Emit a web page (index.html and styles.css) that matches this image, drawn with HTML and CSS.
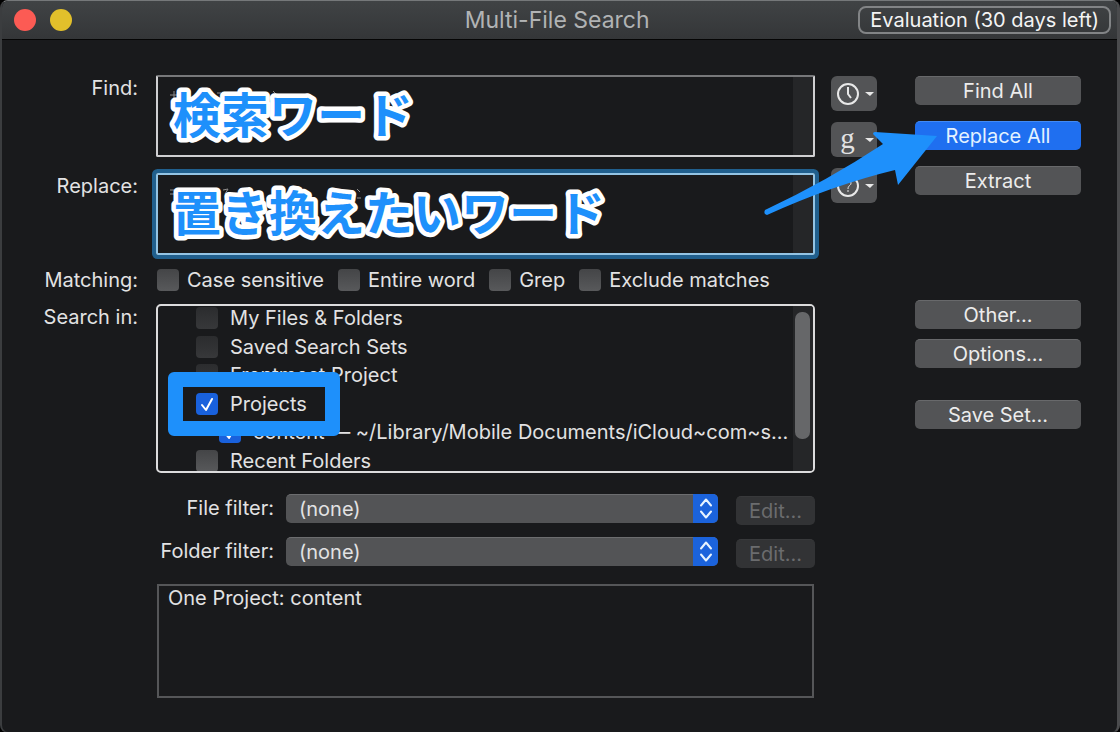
FILE: index.html
```html
<!DOCTYPE html>
<html lang="ja">
<head>
<meta charset="utf-8">
<title>Multi-File Search</title>
<link rel="stylesheet" href="styles.css">
</head>
<body>
<div class="window">
  <header class="titlebar">
    <div class="lights">
      <button class="light light-close" aria-label="Close"></button>
      <button class="light light-min" aria-label="Minimize"></button>
    </div>
    <h1 class="title">Multi-File Search</h1>
    <button class="evaluation">Evaluation (30 days left)</button>
  </header>

  <main class="content">
    <form class="form">
      <label class="label" for="find">Find:</label>
      <div class="field">
        <textarea id="find" class="textbox"></textarea>
        <svg class="note" width="480" height="80">
          <path class="trace" d="M14 20h8M18 16v8M61 18h4M74 18h5M117 16l3 3"/>
          <text class="caption" x="17" y="58">検索ワード</text>
        </svg>
      </div>

      <label class="label" for="replace">Replace:</label>
      <div class="field field-last">
        <textarea id="replace" class="textbox textbox-focused"></textarea>
        <svg class="note" width="480" height="80">
          <path class="trace" d="M14 17h8M14 21h5M67 17l5-1-3 5M185 21h4M201 16l3 3M201 25h4"/>
          <text class="caption" x="17" y="58">置き換えたいワード</text>
        </svg>
      </div>

      <span class="label">Matching:</span>
      <div class="matching">
        <label class="option"><input type="checkbox" class="check">Case sensitive</label>
        <label class="option"><input type="checkbox" class="check">Entire word</label>
        <label class="option"><input type="checkbox" class="check">Grep</label>
        <label class="option"><input type="checkbox" class="check">Exclude matches</label>
      </div>

      <span class="label">Search in:</span>
      <div class="list">
        <ul class="rows">
          <li><label class="row"><input type="checkbox" class="check check-dim">My Files &amp; Folders</label></li>
          <li><label class="row"><input type="checkbox" class="check check-dim">Saved Search Sets</label></li>
          <li><label class="row"><input type="checkbox" class="check check-dim">Frontmost Project</label></li>
          <li><label class="row row-marked"><input type="checkbox" class="check" checked>Projects</label></li>
          <li><label class="row row-child"><input type="checkbox" class="check" checked>content — ~/Library/Mobile Documents/iCloud~com~s...</label></li>
          <li><label class="row"><input type="checkbox" class="check">Recent Folders</label></li>
        </ul>
        <div class="scrollbar"><div class="thumb"></div></div>
      </div>

      <div class="filters">
        <label class="label" for="file-filter">File filter:</label>
        <div class="select-wrap">
          <select id="file-filter" class="select"><option>(none)</option></select>
          <svg class="stepper" viewBox="0 0 25 28"><path d="M8 11l5-6 5 6M8 17l5 6 5-6"/></svg>
        </div>
        <button type="button" class="button" disabled>Edit...</button>
        <label class="label" for="folder-filter">Folder filter:</label>
        <div class="select-wrap">
          <select id="folder-filter" class="select"><option>(none)</option></select>
          <svg class="stepper" viewBox="0 0 25 28"><path d="M8 11l5-6 5 6M8 17l5 6 5-6"/></svg>
        </div>
        <button type="button" class="button" disabled>Edit...</button>
      </div>

      <output class="summary">One Project: content</output>
    </form>

    <div class="tools">
      <button class="tool" aria-label="History">
        <svg width="46" height="35"><circle cx="17" cy="18" r="10" class="line"/><path d="M17 11v7l3 4" class="line"/><path d="M34 16h9l-4 4z" class="solid"/></svg>
      </button>
      <button class="tool" aria-label="Grep patterns"><span class="tool-letter">g</span>
        <svg width="13" height="35"><path d="M1 16h9l-4 4z" class="solid"/></svg>
      </button>
      <button class="tool" aria-label="Help">
        <svg width="46" height="35"><circle cx="17" cy="18" r="10" class="line"/><path d="M14 15c0-4 6-4 6 0 0 3-3 2-3 6M17 22v2" class="line thin"/><path d="M34 16h9l-4 4z" class="solid"/></svg>
      </button>
    </div>

    <div class="actions">
      <div class="group group-main">
        <button class="button">Find All</button>
        <div class="target">
          <button class="button button-primary">Replace All</button>
          <svg class="arrow" width="174" height="86" viewBox="0 0 174 86">
            <path d="M2 79Q64 50 120 13L110 3Q110 1 112 1L174 5 135 54 132 39Q70 54 4 84 0 83 2 79z"/>
          </svg>
        </div>
        <button class="button">Extract</button>
      </div>
      <div class="group group-more">
        <button class="button">Other...</button>
        <button class="button">Options...</button>
      </div>
      <button class="button">Save Set...</button>
    </div>
  </main>
</div>
</body>
</html>
```
FILE: styles.css
```css
* { box-sizing: border-box; }

body {
  margin: 0;
  background: #000;
  color: #e2e2e3;
  font: 20px/24px Inter, "Noto Sans CJK JP", sans-serif;
}

button, textarea, select { font: inherit; color: inherit; margin: 0; }

.window {
  min-height: 100vh;
  background: #191a1c;
  border: 1px solid #75787a;
  border-width: 1px 3px 1px 2px;
  border-color: #75787a #4a4b4d #333436 #3b3d3f;
  border-radius: 8px;
  overflow: hidden;
}

.titlebar {
  height: 39px;
  display: flex;
  align-items: center;
  justify-content: space-between;
  padding: 0 6px 0 12px;
  background: linear-gradient(#404345, #343638);
  border-bottom: 1px solid #050505;
}
.lights { flex: none; display: flex; gap: 14px; width: 242px; }
.light { width: 22px; height: 22px; padding: 0; border: 0; border-radius: 50%; }
.light-close { background: #fc5b54; }
.light-min { background: #e2c02b; }
.title { margin: 0; font-size: 23px; font-weight: 400; color: #b1b3b4; }
.evaluation {
  flex: none;
  height: 28px;
  padding: 0 10px;
  background: transparent;
  border: 2px solid #828486;
  border-radius: 8px;
  color: #f4f4f4;
  line-height: 22px;
}

.content {
  display: grid;
  grid-template-columns: 1fr 84px 166px;
  padding: 35px 36px 34px 28px;
}

.form {
  display: grid;
  grid-template-columns: 108px 1fr;
  column-gap: 18px;
  margin-right: 16px;
}
.label { text-align: right; white-space: nowrap; }
.form > .label { padding-top: 1px; }

.field { position: relative; height: 82px; margin-bottom: 16px; }
.field-last { margin-bottom: 12px; }
.textbox {
  display: block;
  width: 100%;
  height: 100%;
  padding: 8px;
  resize: none;
  outline: 0;
  border: 2px solid #cfcfd1;
  border-top-color: #77787a;
  border-radius: 2px;
  background: linear-gradient(to left, #252628 20px, #191a1c 20px);
}
.textbox-focused {
  border-color: #93c4e4;
  box-shadow: 0 0 0 4px #205f8d;
}
.note { position: absolute; left: 0; top: 0; pointer-events: none; }
.trace { fill: none; stroke: #8c8c8c; stroke-width: 1; }
.caption {
  font: 700 48px "Noto Sans CJK JP", sans-serif;
  fill: #1e90fb;
  stroke: #fff;
  stroke-width: 9px;
  stroke-linejoin: round;
  paint-order: stroke fill;
}

.matching {
  display: flex;
  gap: 14px;
  height: 37px;
  padding: 1px 0 0 1px;
  align-items: flex-start;
}
.option { display: flex; align-items: center; gap: 8px; white-space: nowrap; }
.check {
  appearance: none;
  flex: none;
  width: 22px;
  height: 22px;
  margin: 0;
  border-radius: 4px;
  background: linear-gradient(#444547, #58595b);
}
.check-dim { background: linear-gradient(#2b2c2e, #37383a); }
.check:checked {
  background: #1961dc url("data:image/svg+xml,%3Csvg xmlns='http://www.w3.org/2000/svg' viewBox='0 0 22 22'%3E%3Cpath d='M6 12l4 5 6-11' fill='none' stroke='white' stroke-width='2' stroke-linecap='round' stroke-linejoin='round'/%3E%3C/svg%3E");
}

.list {
  display: flex;
  height: 169px;
  border: 2px solid #dcdcdd;
  border-radius: 5px;
  overflow: hidden;
}
.rows {
  flex: 1;
  min-width: 0;
  height: 171px;
  margin: -2px 0 0;
  padding: 0 0 0 38px;
  list-style: none;
  display: grid;
  grid-template-rows: repeat(6, 1fr);
  align-items: center;
}
.row {
  display: flex;
  align-items: center;
  gap: 12px;
  width: fit-content;
  white-space: nowrap;
}
.row-child { padding-left: 23px; }
.row-marked { position: relative; }
.row-marked::after {
  content: "";
  position: absolute;
  left: -28px;
  right: -33px;
  top: -20px;
  bottom: -20px;
  border: 15px solid #1e90fb;
  border-radius: 6px;
}
.scrollbar { flex: none; width: 20px; padding: 6px 3px 0 2px; background: #252628; }
.thumb { height: 127px; border-radius: 7px; background: #666769; }

.filters {
  grid-column: 2;
  display: grid;
  grid-template-columns: 118px 1fr 79px;
  column-gap: 12px;
  row-gap: 12px;
  margin-top: 21px;
}
.filters .label { line-height: 29px; }
.filters .button { margin-top: 2px; }
.select-wrap { position: relative; height: 29px; margin-right: 6px; }
.select {
  appearance: none;
  display: block;
  width: 100%;
  height: 29px;
  padding: 0 30px 0 13px;
  border: 0;
  border-top: 1px solid #6c6d6f;
  border-radius: 5px;
  background: #535456;
}
.stepper {
  position: absolute;
  right: 0;
  top: 0;
  width: 25px;
  height: 29px;
  border-radius: 0 5px 5px 0;
  background: #1b63dc;
  fill: none;
  stroke: #e6f3ff;
  stroke-width: 2;
  stroke-linecap: round;
  stroke-linejoin: round;
  pointer-events: none;
}

.summary {
  grid-column: 2;
  height: 114px;
  margin: 16px 1px 0;
  padding: 0 9px;
  border: 2px solid #555658;
}

.button {
  display: block;
  width: 100%;
  height: 29px;
  padding: 0;
  border: 0;
  border-top: 1px solid #68696b;
  border-radius: 5px;
  background: #535456;
  color: #ececec;
}
.button:disabled { background: #323335; border-color: #38393b; color: #6b6c6e; }
.button-primary { background: #1f6ff0; border-color: #428af5; color: #e3f2ff; }

.tools { display: flex; flex-direction: column; gap: 11px; padding-top: 1px; }
.tool {
  display: flex;
  width: 46px;
  height: 35px;
  padding: 0;
  border: 0;
  border-radius: 6px;
  background: #535456;
}
.tool svg { display: block; }
.line { fill: none; stroke: #e8e8e8; stroke-width: 2; }
.thin { stroke-width: 1; }
.solid { fill: #e8e8e8; }
.tool-letter { width: 33px; font: 29px/32px "Liberation Serif", serif; text-align: center; }

.actions { padding-top: 1px; }
.group { display: grid; }
.group-main { gap: 16px; margin-bottom: 105px; }
.group-more { gap: 10px; margin-bottom: 32px; }
.target { position: relative; }
.arrow { position: absolute; right: 144px; top: 10px; fill: #1e90fb; pointer-events: none; }
```
